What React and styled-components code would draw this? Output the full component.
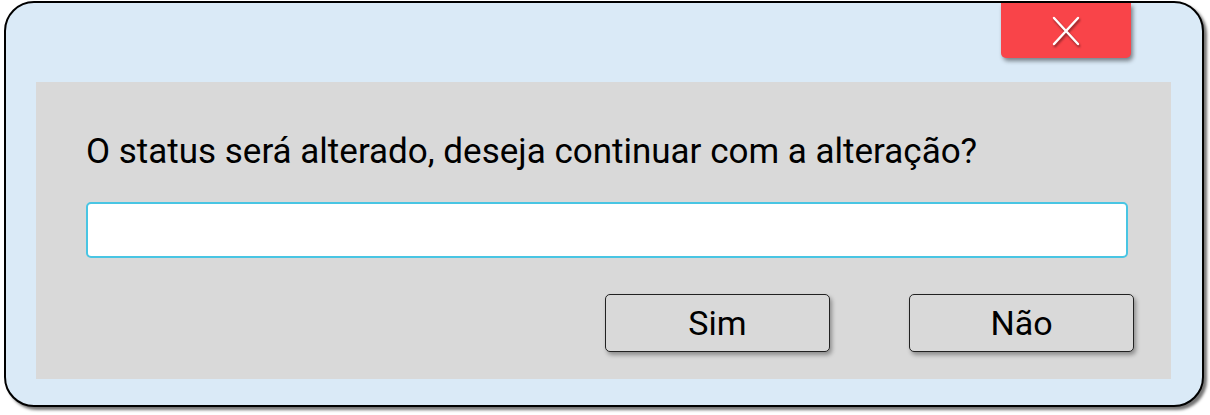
import React from "react";
import styled, { createGlobalStyle } from "styled-components";

const Global = createGlobalStyle`
  html, body { margin: 0; padding: 0; background: #ffffff; }
  body { font-family: Roboto, "Liberation Sans", sans-serif; }
  * { box-sizing: border-box; }
`;

const Page = styled.div`
  padding: 1px 0 0 4px;
  width: 1210px;
  height: 415px;
`;

const Frame = styled.div`
  width: 1200px;
  height: 406px;
  border: 2px solid #000;
  border-radius: 30px;
  background: #daeaf7;
  box-shadow: 3px 3px 3px rgba(0, 0, 0, 0.55);
  display: flex;
  flex-direction: column;
  padding: 0 31px 26px 30px;
`;

const Header = styled.div`
  height: 79px;
  display: flex;
  justify-content: flex-end;
  align-items: flex-start;
  padding-right: 40px;
`;

const CloseButton = styled.button`
  width: 130px;
  height: 55px;
  border: none;
  border-radius: 0 0 5px 5px;
  background: #f94449;
  box-shadow: 2px 3px 4px rgba(0, 0, 0, 0.45);
  display: flex;
  align-items: center;
  justify-content: center;
  padding: 0;
  cursor: pointer;
`;

const Panel = styled.div`
  flex: 1;
  background: #d9d9d9;
  padding: 50px 37px 27px 50px;
  display: flex;
  flex-direction: column;
`;

const Message = styled.p`
  margin: 0;
  font-size: 35px;
  line-height: 40px;
  color: #000;
`;

const Input = styled.input`
  margin-top: 30px;
  width: 1042px;
  height: 56px;
  border: 2px solid #49c5e3;
  border-radius: 5px;
  background: #fff;
  outline: none;
`;

const Actions = styled.div`
  margin-top: 36px;
  display: flex;
  justify-content: flex-end;
  gap: 79px;
`;

const ActionButton = styled.button`
  width: 225px;
  height: 58px;
  border: 1px solid #222;
  border-radius: 5px;
  background: #d9d9d9;
  box-shadow: 2px 3px 4px rgba(0, 0, 0, 0.35);
  font-family: Roboto, "Liberation Sans", sans-serif;
  font-size: 34px;
  color: #000;
  display: flex;
  align-items: center;
  justify-content: center;
  padding: 0;
`;

const CloseIcon = () => (
  <svg width="30" height="32" viewBox="0 0 30 32" style={{ filter: "drop-shadow(1px 2px 1px rgba(0,0,0,0.45))" }}>
    <path d="M3 3 L27 29 M27 3 L3 29" stroke="#fff" strokeWidth="2.4" strokeLinecap="round" fill="none" />
  </svg>
);

export default function App() {
  return (
    <>
      <Global />
      <Page>
        <Frame>
          <Header>
            <CloseButton aria-label="Fechar">
              <CloseIcon />
            </CloseButton>
          </Header>
          <Panel>
            <Message>O status será alterado, deseja continuar com a alteração?</Message>
            <Input />
            <Actions>
              <ActionButton>Sim</ActionButton>
              <ActionButton>Não</ActionButton>
            </Actions>
          </Panel>
        </Frame>
      </Page>
    </>
  );
}
